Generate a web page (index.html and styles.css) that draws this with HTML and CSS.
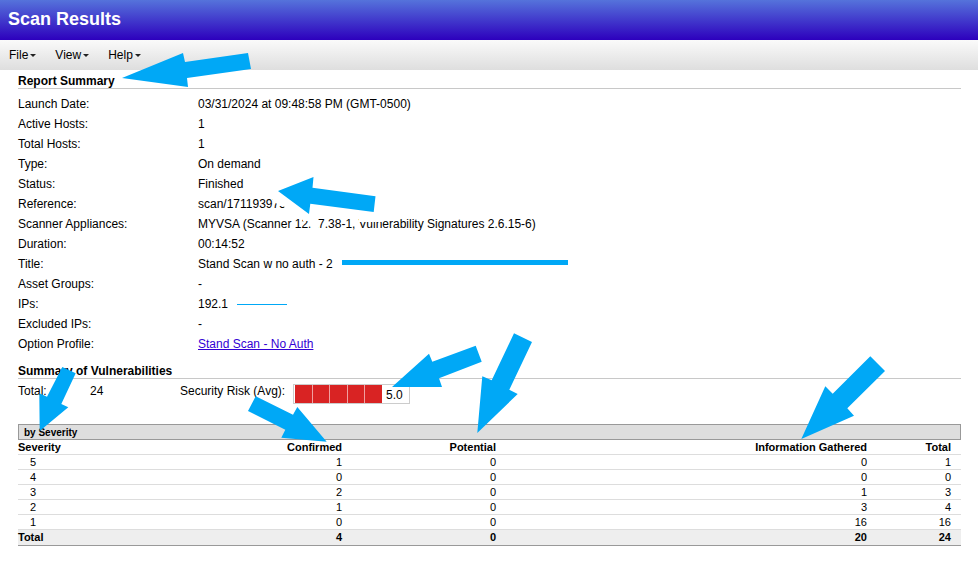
FILE: index.html
```html
<!DOCTYPE html>
<html lang="en">
<head>
<meta charset="utf-8">
<title>Scan Results</title>
<link rel="stylesheet" href="styles.css">
</head>
<body>
<header class="banner"><h1>Scan Results</h1></header>
<nav class="menubar" aria-label="Report menu">
  <button type="button">File</button>
  <button type="button">View</button>
  <button type="button">Help</button>
</nav>
<main class="report">
  <section>
    <h2>Report Summary</h2>
    <dl class="details">
      <dt>Launch Date:</dt><dd>03/31/2024 at 09:48:58 PM (GMT-0500)</dd>
      <dt>Active Hosts:</dt><dd>1</dd>
      <dt>Total Hosts:</dt><dd>1</dd>
      <dt>Type:</dt><dd>On demand</dd>
      <dt>Status:</dt><dd>Finished</dd>
      <dt>Reference:</dt><dd>scan/171193973</dd>
      <dt>Scanner Appliances:</dt><dd>MYVSA (Scanner 12.17.38-1, Vulnerability Signatures 2.6.15-6)</dd>
      <dt>Duration:</dt><dd>00:14:52</dd>
      <dt>Title:</dt><dd>Stand Scan w no auth - 2</dd>
      <dt>Asset Groups:</dt><dd>-</dd>
      <dt>IPs:</dt><dd>192.1</dd>
      <dt>Excluded IPs:</dt><dd>-</dd>
      <dt>Option Profile:</dt><dd><a href="#profile">Stand Scan - No Auth</a></dd>
    </dl>
  </section>
  <section>
    <h2>Summary of Vulnerabilities</h2>
    <div class="totals">
      <span class="total-label">Total:</span>
      <span class="total-value">24</span>
      <span class="risk-label">Security Risk (Avg):</span>
      <div class="risk">
        <div class="risk-bar"><i></i><i></i><i></i><i></i><i></i></div>
        <span>5.0</span>
      </div>
    </div>
    <h3 id="by-severity">by Severity</h3>
    <table class="severity" aria-labelledby="by-severity">
      <colgroup><col class="col-severity"><col class="col-confirmed"><col class="col-potential"><col><col class="col-total"></colgroup>
      <thead><tr><th>Severity</th><th>Confirmed</th><th>Potential</th><th>Information Gathered</th><th>Total</th></tr></thead>
      <tbody>
        <tr><td>5</td><td>1</td><td>0</td><td>0</td><td>1</td></tr>
        <tr><td>4</td><td>0</td><td>0</td><td>0</td><td>0</td></tr>
        <tr><td>3</td><td>2</td><td>0</td><td>1</td><td>3</td></tr>
        <tr><td>2</td><td>1</td><td>0</td><td>3</td><td>4</td></tr>
        <tr><td>1</td><td>0</td><td>0</td><td>16</td><td>16</td></tr>
      </tbody>
      <tfoot><tr><th>Total</th><td>4</td><td>0</td><td>20</td><td>24</td></tr></tfoot>
    </table>
  </section>
</main>
<svg class="annotations" width="978" height="564" viewBox="0 0 978 564" aria-hidden="true">
  <g fill="#fff">
    <path d="M273 191 313 176 380 190 382 222 359 222 359 217 318 217 318 230 311 230 310 221 303 221 303 214 292 211 285 209 284 206 279 206 276 203 273 202Z"/>
  </g>
  <g fill="#00a8f6">
    <path d="M122 78 183 53 185 62 248 53 251 69 187 78 188 87Z"/>
    <path d="M278 191 313.500 177 312.500 187.700 375.500 196.300 373.700 212 310.300 203.700 309 214Z"/>
    <path d="M62.300 367 75.700 373.300 61.300 404 68.300 407.300 39.700 431 39.300 393.300 47 396.700Z"/>
    <path d="M326.700 441.700 297.300 407 293 414.700 255.700 396.300 248 411 285.300 429.700 281.300 437.700Z"/>
    <path d="M392 387 429 353.700 432.300 361.700 475.700 345.700 481.700 361.700 439 378.300 442 387Z"/>
    <path d="M477.300 433 482.300 376.300 491.700 380.300 514 333.300 532 342 509.300 389.700 517.700 394Z"/>
    <path d="M801.300 439 825.300 386.300 832.700 393.700 870.300 356.300 885 371 847.300 408.300 854 415.700Z"/>
    <path d="M342 260H568V265H342Z"/>
    <path d="M237 304H287V305H237Z"/>
  </g>
</svg>
</body>
</html>
```
FILE: styles.css
```css
* { box-sizing: border-box; }

body {
  margin: 0;
  background: #fff;
  color: #000;
  font: 12px/20px "Liberation Sans", Arial, sans-serif;
}

h1, h2, h3, dl, dd { margin: 0; }

.banner {
  height: 40px;
  padding: 0 8px;
  background: linear-gradient(#5573db, #2d00bd);
  color: #fff;
}

.banner h1 { font-size: 18px; line-height: 38px; }

.menubar {
  display: flex;
  gap: 19px;
  height: 30px;
  padding: 0 9px;
  background: linear-gradient(#fafafa, #dedede);
}

.menubar button {
  display: flex;
  align-items: center;
  gap: 2px;
  padding: 0;
  border: 0;
  background: none;
  color: #000;
  font: inherit;
}

.menubar button::after {
  content: "";
  border: 3px solid transparent;
  border-top-color: #222;
  border-bottom: 0;
}

.report { padding: 0 17px 18px 18px; }

h2 {
  height: 19px;
  border-bottom: 1px solid #c8c8c8;
  font-size: 12px;
  line-height: 22px;
}

.details {
  display: grid;
  grid-template-columns: 180px 1fr;
  padding: 5px 0 6px;
}

.details a { color: #3300d4; }

.totals {
  display: flex;
  height: 45px;
  padding-top: 2px;
}

.total-label { width: 72px; }
.total-value { width: 90px; }
.risk-label { width: 113px; }

.risk {
  display: flex;
  gap: 4px;
  width: 117px;
  height: 20px;
  margin-top: 3px;
  padding: 0 1px;
  border: 1px solid #ccc;
}

.risk-bar {
  display: flex;
  gap: 1px;
  width: 87px;
  height: 18px;
  background: #f0a0a0;
}

.risk-bar i { flex: 1; background: #d92323; }

h3 {
  height: 16px;
  padding-left: 5px;
  border: 1px solid #999;
  background: #dedede;
  font-size: 10px;
  line-height: 15px;
}

.severity {
  width: 100%;
  table-layout: fixed;
  border-collapse: separate;
  border-spacing: 0;
  font-size: 11px;
  line-height: 14px;
}

.col-severity, .col-potential { width: 154px; }
.col-confirmed { width: 180px; }
.col-total { width: 84px; }

.severity th, .severity td {
  padding: 0 10px 0 0;
  border-bottom: 1px solid #ddd;
  text-align: right;
}

.severity th:first-child { padding-left: 0; text-align: left; }
.severity td:first-child { padding-left: 12px; text-align: left; }
.severity tfoot { background: #eee; font-weight: bold; }
.severity tfoot th, .severity tfoot td { padding-bottom: 1px; border-bottom-color: #999; }

.annotations {
  position: absolute;
  top: 0;
  left: 0;
  pointer-events: none;
}
```
